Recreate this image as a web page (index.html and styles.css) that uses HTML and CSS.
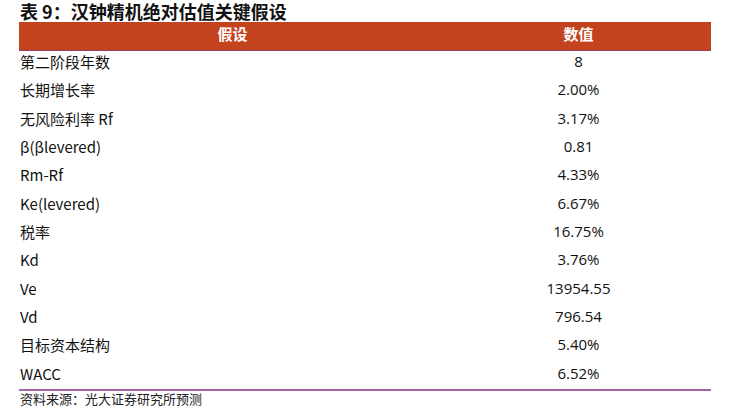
FILE: index.html
```html
<!DOCTYPE html>
<html lang="zh">
<head>
<meta charset="utf-8">
<link rel="stylesheet" href="styles.css">
</head>
<body>
<div class="page">
  <h1 class="title">表 9：汉钟精机绝对估值关键假设</h1>
  <div class="table">
    <div class="head">
      <div class="cell c1">假设</div>
      <div class="cell c2">数值</div>
    </div>
    <div class="row"><div class="cell c1">第二阶段年数</div><div class="cell c2">8</div></div>
    <div class="row"><div class="cell c1">长期增长率</div><div class="cell c2">2.00%</div></div>
    <div class="row"><div class="cell c1">无风险利率 Rf</div><div class="cell c2">3.17%</div></div>
    <div class="row"><div class="cell c1">β(βlevered)</div><div class="cell c2">0.81</div></div>
    <div class="row"><div class="cell c1">Rm-Rf</div><div class="cell c2">4.33%</div></div>
    <div class="row"><div class="cell c1">Ke(levered)</div><div class="cell c2">6.67%</div></div>
    <div class="row"><div class="cell c1">税率</div><div class="cell c2">16.75%</div></div>
    <div class="row"><div class="cell c1">Kd</div><div class="cell c2">3.76%</div></div>
    <div class="row"><div class="cell c1">Ve</div><div class="cell c2">13954.55</div></div>
    <div class="row"><div class="cell c1">Vd</div><div class="cell c2">796.54</div></div>
    <div class="row"><div class="cell c1">目标资本结构</div><div class="cell c2">5.40%</div></div>
    <div class="row last"><div class="cell c1">WACC</div><div class="cell c2">6.52%</div></div>
  </div>
  <div class="source">资料来源：光大证券研究所预测</div>
</div>
</body>
</html>
```
FILE: styles.css
```css
html, body {
  margin: 0;
  padding: 0;
  background: #ffffff;
}
body {
  font-family: "Noto Sans CJK SC", "Noto Sans", sans-serif;
  color: #111111;
}
.page {
  width: 731px;
  padding-left: 19px;
  box-sizing: border-box;
}
.title {
  margin: 0;
  height: 22px;
  font-size: 18px;
  line-height: 22px;
  font-weight: bold;
  padding-left: 1px;
  color: #111;
  white-space: nowrap;
}
.table {
  width: 692px;
  display: flex;
  flex-direction: column;
}
.head, .row {
  display: grid;
  grid-template-columns: 427px 265px;
}
.head {
  height: 28px;
  background: #c4431f;
  color: #ffffff;
  font-weight: bold;
  font-size: 15px;
  border-bottom: 1px solid #9c3a6a;
}
.head .cell {
  text-align: center;
  line-height: 24px;
}
.row {
  height: 28.33px;
  font-size: 15px;
  line-height: 21px;
}
.row .c1 {
  padding-left: 1px;
}
.row .c2 {
  text-align: center;
  font-family: "Open Sans", "Noto Sans", sans-serif;
}
.row.last {
  border-bottom: 2px solid #a567a4;
  box-sizing: border-box;
}
.source {
  font-size: 13px;
  line-height: 16px;
  padding-left: 1px;
  color: #222;
}
```
